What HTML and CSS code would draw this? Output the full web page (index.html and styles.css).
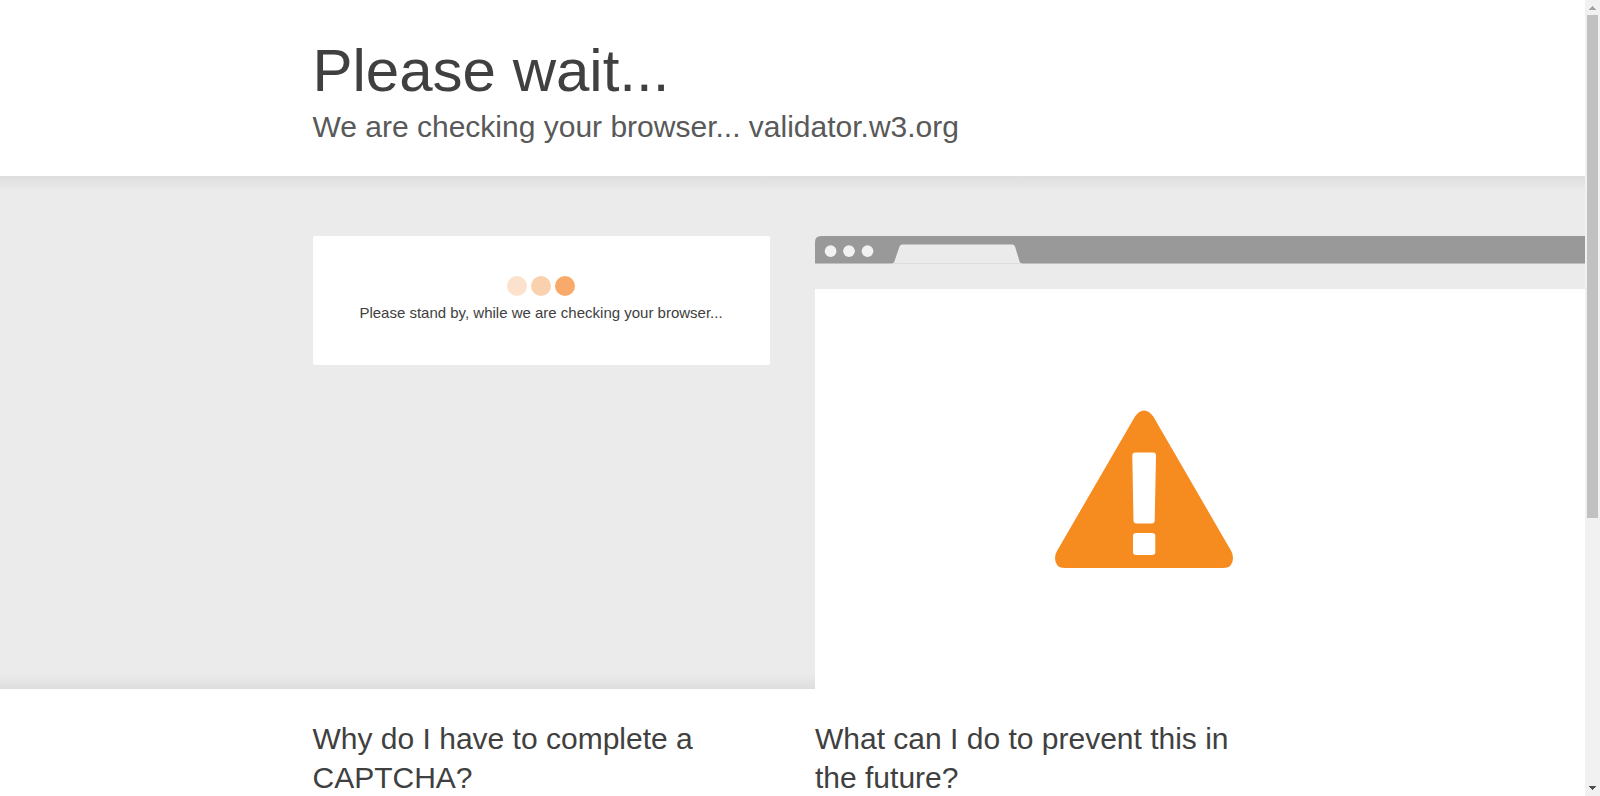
FILE: index.html
```html
<!DOCTYPE html>
<html lang="en">
<head>
    <meta charset="UTF-8">
    <title>Please wait... | validator.w3.org</title>
    <link rel="stylesheet" href="styles.css">
</head>
<body>
    <div class="page">
        <header class="wrapper header">
            <h1>Please wait...</h1>
            <h2 class="subheadline">We are checking your browser... validator.w3.org</h2>
        </header>

        <section class="highlight">
            <div class="wrapper columns">
                <div class="captcha-box">
                    <div class="bubbles">
                        <span class="bubble bubble-1"></span>
                        <span class="bubble bubble-2"></span>
                        <span class="bubble bubble-3"></span>
                    </div>
                    <p>Please stand by, while we are checking your browser...</p>
                </div>
                <div class="browser">
                    <svg class="browser-bar" width="800" height="53" viewBox="0 0 800 53">
                        <path fill="#ebebeb" d="M0 10h800v43H0z"/>
                        <path fill="#999" d="M0 27V6Q0 0 6 0H800V27z"/>
                        <path fill="#bfbfbf" d="M0 27h800v1H0z"/>
                        <path fill="#ebebeb" d="M77 27.500Q78.800 27.300 79.400 25.500L84.500 10.500Q85.200 8.400 87.300 8.400H197.300Q199.300 8.400 200 10.500L204.600 25.500Q205.200 27.300 207 27.500V28H77z"/>
                        <path fill="#dedede" d="M78 27h128v1H78z"/>
                        <circle fill="#f2f2f2" cx="15.600" cy="15.200" r="5.850"/>
                        <circle fill="#f2f2f2" cx="34" cy="15.200" r="5.850"/>
                        <circle fill="#f2f2f2" cx="52.500" cy="15.200" r="5.850"/>
                    </svg>
                    <div class="browser-body">
                        <svg width="179" height="159" viewBox="0 0 179 159">
                            <path fill="#f68b1f" d="M80 6.500Q84 .4 89 .4T98.300 6.500L176.200 141Q178 144 178 148Q178 158 168 158H10Q0 158 0 148Q0 144 2 141z"/>
                            <path fill="#fff" d="M80.300 42.400H98Q101 42.400 101 45.400L99.700 110.500Q99.600 113.500 96.600 113.500H81.600Q78.600 113.500 78.500 110.500L77.300 45.400Q77.300 42.400 80.300 42.400z"/>
                            <rect fill="#fff" x="78" y="123" width="22.300" height="22" rx="3"/>
                        </svg>
                    </div>
                </div>
            </div>
        </section>

        <section class="wrapper columns questions">
            <h2>Why do I have to complete a CAPTCHA?</h2>
            <h2>What can I do to prevent this in the future?</h2>
        </section>
    </div>

    <div class="scrollbar">
        <svg width="15" height="15" viewBox="0 0 15 15" shape-rendering="crispEdges">
            <path fill="#a3a3a3" d="M7 6h1v1h1v1h1v1h1v1H4V9h1V8h1V7h1z"/>
        </svg>
        <div class="track"><div class="thumb"></div></div>
        <svg width="15" height="15" viewBox="0 0 15 15" shape-rendering="crispEdges">
            <path fill="#505050" d="M4 5h7v1h-1v1H9v1H8v1H7V8H6V7H5V6H4z"/>
        </svg>
    </div>
</body>
</html>
```
FILE: styles.css
```css
html, body {
    height: 100%;
    margin: 0;
}
body {
    display: flex;
    overflow: hidden;
    background: #fff;
    color: #404040;
    font-family: "Liberation Sans", Arial, sans-serif;
    font-size: 15px;
    line-height: 1.5;
}
h1, h2, p {
    margin: 0;
    font-weight: 400;
}
h1 {
    font-size: 60px;
    line-height: 72px;
}
h2 {
    font-size: 30px;
    line-height: 39px;
}
.page {
    flex: 1;
    min-width: 0;
    overflow: hidden;
}
.wrapper {
    width: 960px;
    margin: 0 auto;
}
.header {
    padding: 35px 0 30px;
}
.subheadline {
    color: #595959;
}
.columns {
    display: grid;
    grid-template-columns: 457px 457px;
    column-gap: 45.5px;
    align-items: start;
}

/* grey band, shaded along its top and bottom edges */
.highlight {
    box-sizing: border-box;
    height: 513px;
    padding-top: 60px;
    background: linear-gradient(#dedede, #ebebeb 3%, #ebebeb 97%, #dedede);
}
.captcha-box {
    box-sizing: border-box;
    height: 129px;
    padding-top: 40px;
    background: #fff;
    border-radius: 2px;
    text-align: center;
}
.bubbles {
    display: flex;
    justify-content: center;
    gap: 4px;
    margin-bottom: 6px;
}
.bubble {
    width: 20px;
    height: 20px;
    border-radius: 50%;
}
.bubble-1 {
    background: #fce2cc;
}
.bubble-2 {
    background: #fad1ae;
}
.bubble-3 {
    background: #f9aa6a;
}

/* browser window runs off the right side of the page */
.browser {
    width: 800px;
}
.browser-bar {
    display: block;
}
.browser-body {
    box-sizing: border-box;
    height: 400px;
    padding: 121px 0 0 240px;
    background: #fff;
}
.questions {
    padding-top: 30px;
}

.scrollbar {
    display: flex;
    flex-direction: column;
    width: 15px;
    background: #f1f1f1;
}
.scrollbar svg {
    display: block;
}
.track {
    flex: 1;
    padding: 0 2px;
}
.thumb {
    height: 503px;
    background: #c1c1c1;
}
```
